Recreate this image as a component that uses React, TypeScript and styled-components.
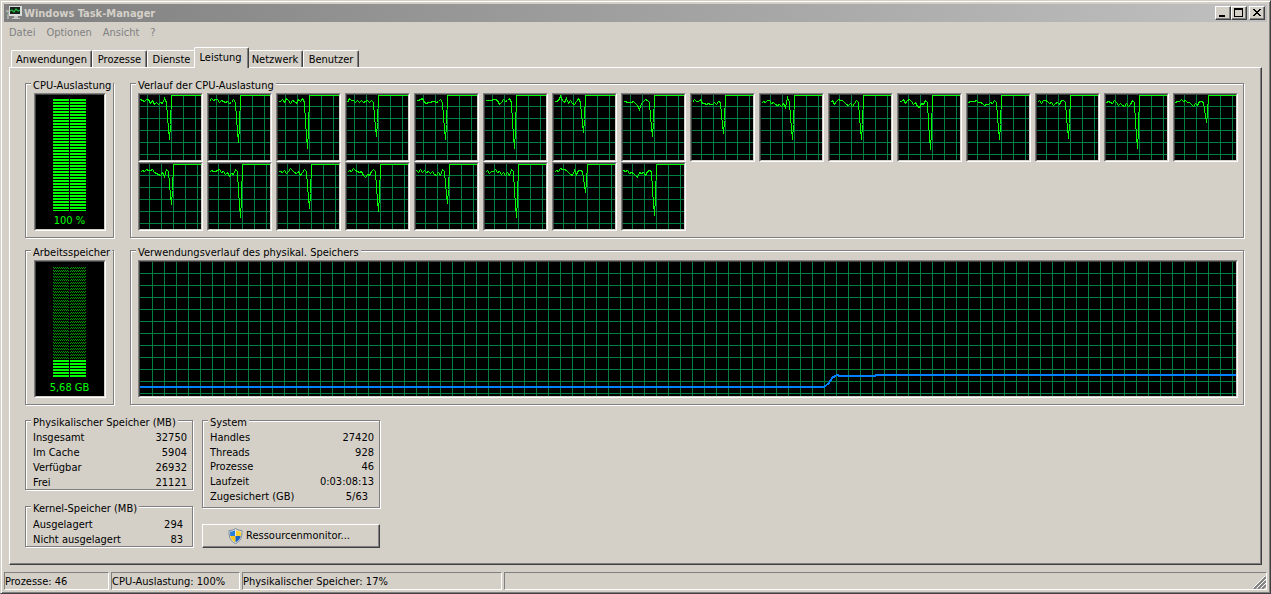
import React from "react";
import styled, { createGlobalStyle, css } from "styled-components";

const face = "#d4d0c8";
const shade = "#808080";
const dark = "#404040";

const GlobalStyle = createGlobalStyle`
  *, *::before, *::after { box-sizing: border-box; }
  body {
    margin: 0;
    background: ${face};
    color: #000;
    font: 11px/14px "DejaVu Sans Condensed", "DejaVu Sans", sans-serif;
  }
  button { font: inherit; color: inherit; }
`;

const raised = css`
  background: ${face};
  border: 1px solid;
  border-color: #fff ${dark} ${dark} #fff;
  box-shadow: inset -1px -1px 0 ${shade};
`;

const Window = styled.div`
  display: flex;
  flex-direction: column;
  min-height: 100vh;
  padding: 3px;
  border: 1px solid;
  border-color: ${face} ${dark} ${dark} ${face};
  box-shadow: inset 1px 1px 0 #fff, inset -1px -1px 0 ${shade};
`;

const TitleBar = styled.header`
  display: flex;
  align-items: center;
  height: 18px;
  padding: 0 2px;
  background: linear-gradient(to right, #808080, #c0c0c0);
`;

const Title = styled.h1`
  flex: 1;
  margin: 0 0 0 2px;
  padding-top: 2px;
  color: ${face};
  font-size: 11px;
  font-weight: bold;
  line-height: 16px;
`;

const CaptionButton = styled.button<{ $apart?: boolean }>`
  ${raised}
  display: flex;
  width: 16px;
  height: 14px;
  margin-left: ${(p) => (p.$apart ? 2 : 0)}px;
  padding: 0;
`;

const MenuBar = styled.nav`
  display: flex;
  gap: 11px;
  height: 20px;
  padding: 2px 5px 0;
`;

const MenuItem = styled.button`
  padding: 0;
  border: 0;
  background: none;
  color: ${shade};
`;

const TabList = styled.div`
  display: flex;
  align-items: flex-end;
  height: 25px;
  padding: 0 7px;
`;

const Tab = styled.button<{ $width: number; $active?: boolean }>`
  ${raised}
  width: ${(p) => p.$width}px;
  height: ${(p) => (p.$active ? 21 : 17)}px;
  margin: ${(p) => (p.$active ? "0 -2px -1px" : "0")};
  padding: ${(p) => (p.$active ? "0 2px 1px 0" : "1px 0 0")};
  border-bottom: 0;
  border-radius: 2px 2px 0 0;
  box-shadow: inset -1px 0 0 ${shade};
  white-space: nowrap;
  z-index: ${(p) => (p.$active ? 1 : 0)};
`;

const Panel = styled.main`
  ${raised}
  flex: 1;
  display: flex;
  flex-direction: column;
  margin: 0 5px 7px;
  padding: 15px 17px 16px 15px;
`;

const MeterRow = styled.div`
  display: flex;
  gap: 16px;
  margin-bottom: 12px;
`;

const Group = styled.section<{ $grow?: boolean; $width?: number; $bottom?: number }>`
  flex: ${(p) => (p.$grow ? "1 1 0" : "none")};
  width: ${(p) => (p.$width ? `${p.$width}px` : "auto")};
  min-width: 0;
  padding: 0 5px ${(p) => p.$bottom ?? 0}px 7px;
  border: 1px solid ${shade};
  box-shadow: 1px 1px 0 #fff, inset 1px 1px 0 #fff;
`;

const Legend = styled.h2`
  width: fit-content;
  margin: -5px 0 0 -2px;
  padding: 0 2px;
  background: ${face};
  font-size: 11px;
  font-weight: normal;
  line-height: 14px;
  white-space: nowrap;
`;

const Sunken = styled.div`
  overflow: hidden;
  border: 1px solid;
  border-color: ${shade} #fff #fff ${shade};
  background: ${face};

  > * {
    border: 1px solid;
    border-color: ${dark} ${face} ${face} ${dark};
    background: #000;
  }
`;

const MeterFace = styled.div`
  display: flex;
  flex-direction: column;
  align-items: center;
  height: 136px;
  padding: 4px 1px 0 0;
  color: #0f0;
`;

const MeterBars = styled.svg`
  display: block;
  width: 33px;
  height: 113px;
  margin-bottom: 2px;
`;

const MeterFrame = styled(Sunken)`
  margin: 0 2px 0 1px;
`;

const CpuGrid = styled.div`
  display: grid;
  grid-template-columns: repeat(16, 1fr);
  column-gap: 4px;
`;

const Plot = styled.svg<{ $height: number }>`
  display: block;
  width: 100%;
  height: ${(p) => p.$height}px;
`;

const Details = styled.div`
  display: flex;
  gap: 9px;
  margin-top: 3px;
`;

const Column = styled.div<{ $width: number }>`
  display: flex;
  flex-direction: column;
  gap: 16px;
  width: ${(p) => p.$width}px;
`;

const Figures = styled.table<{ $height: number }>`
  width: 100%;
  height: ${(p) => p.$height}px;
  border-collapse: collapse;
  line-height: 13px;
`;

const Name = styled.th`
  padding: 1px 0 0;
  font-weight: normal;
  text-align: left;
  white-space: nowrap;
`;

const Value = styled.td<{ $inset?: number }>`
  padding: 1px ${(p) => p.$inset ?? 0}px 0 0;
  text-align: right;
`;

const PushButton = styled.button`
  ${raised}
  display: flex;
  align-items: center;
  justify-content: center;
  gap: 3px;
  height: 24px;
  padding: 0 4px 1px 0;
`;

const StatusBar = styled.footer`
  display: flex;
  gap: 2px;
  height: 18px;
`;

const StatusCell = styled.div<{ $width?: number }>`
  flex: ${(p) => (p.$width ? `0 0 ${p.$width}px` : "1")};
  display: flex;
  align-items: flex-end;
  justify-content: ${(p) => (p.$width ? "flex-start" : "flex-end")};
  border: 1px solid;
  border-color: ${shade} #fff #fff ${shade};
  line-height: 14px;
  white-space: nowrap;
`;

const AppIcon = () => (
  <svg width="16" height="16" viewBox="0 0 16 16" aria-hidden="true">
    <path d="M0 5h3v9H1V7H0z" fill="#a9aca6" />
    <path d="M1 8h1v1H1z" fill="#2c9a3c" />
    <path d="M3 1h13v10H3z" fill="#d9dcda" />
    <path d="M4 2h10v7H4z" fill="#15201a" />
    <path d="M4 6l2-1 2 2 2-3 2 2 2-1" fill="none" stroke="#22b43c" strokeWidth="1.3" />
    <path d="M8 11h4v2h2v1H6v-1h2z" fill="#c5c8c5" />
  </svg>
);

const ShieldIcon = () => (
  <svg width="15" height="16" viewBox="0 0 15 16" aria-hidden="true">
    <path d="M7.500.5C9.500 2 11.500 2.500 14 2.500C14.200 9 12.500 13.500 7.500 15.500C2.500 13.500.8 9 1 2.500C3.500 2.500 5.500 2 7.500.5z" fill="#dfe3e6" stroke="#7d8c99" />
    <path d="M7 2.200V8H2.200C2 6.500 2 5 2.100 3.600C4 3.500 5.500 3 7 2.200z" fill="#2a7fd8" />
    <path d="M8 2.200C9.500 3 11 3.500 12.900 3.600C13 5 13 6.500 12.800 8H8z" fill="#fbd22b" />
    <path d="M2.300 8H7.500v6.300C4.500 13 2.900 11 2.300 8z" fill="#f8c81c" />
    <path d="M7.500 8h5.200c-.6 3-2.200 5-5.200 6.300z" fill="#1c63c4" />
  </svg>
);

const Grip = () => (
  <svg width="13" height="13" viewBox="0 0 13 13" aria-hidden="true">
    <path d="M1 13L13 1M5 13L13 5M9 13L13 9" stroke="#808080" strokeWidth="2" />
    <path d="M0 12L12 0M4 12L13 3M8 12L13 7" stroke="#fff" />
  </svg>
);

const Meter = ({ id, lit, start, label }: { id: string; lit: number; start: number; label: string }) => (
  <MeterFrame>
    <MeterFace>
      <MeterBars shapeRendering="crispEdges" aria-hidden="true">
        <defs>
          <pattern id={`${id}-lit`} y={start} width="17" height="3" patternUnits="userSpaceOnUse">
            <path d="M0 0h16v2H0z" fill="#0f0" />
          </pattern>
          <pattern id={`${id}-dim`} y={start} width="2" height="3" patternUnits="userSpaceOnUse">
            <path d="M0 0h1v1H0zM1 1h1v1H1z" fill="#00a000" />
          </pattern>
        </defs>
        <rect y={start} width="33" height={112 - start - lit} fill={`url(#${id}-dim)`} />
        <rect x="16" width="1" height="113" fill="#000" />
        <rect y={112 - lit} width="33" height={lit} fill={`url(#${id}-lit)`} />
      </MeterBars>
      {label}
    </MeterFace>
  </MeterFrame>
);

/* Twelve-pixel grid; lines past the plot's edge are clipped by the svg. */
const GridLines = ({ x }: { x: number }) => {
  const columns = Array.from({ length: 340 }, (_, i) => `M${x + i * 12} 0h1v200h-1z`);
  const rows = Array.from({ length: 12 }, (_, i) => `M0 ${11 + i * 12}h4000v1H0z`);
  return (
    <g fill="#008040">
      <path d={columns.join("")} />
      <path d={rows.join("")} />
    </g>
  );
};

/* Load history per core: samples two pixels apart, then the depth of the drop before full load. */
const cores: { load: number[]; drop: number }[] = [
  { load: [4, 5, 6, 4, 4, 8, 5, 9, 7, 9, 7, 8, 3], drop: 44 },
  { load: [6, 3, 5, 4, 4, 7, 5, 6, 7, 6, 8, 7, 4], drop: 47 },
  { load: [6, 6, 4, 7, 3, 5, 8, 5, 6, 8, 4, 6, 3], drop: 53 },
  { load: [7, 3, 5, 5, 7, 5, 7, 5, 7, 6, 5, 7, 5], drop: 41 },
  { load: [5, 5, 4, 3, 7, 8, 7, 7, 6, 6, 7, 6, 4], drop: 44 },
  { load: [5, 5, 5, 5, 4, 4, 5, 9, 7, 4, 6, 5, 3], drop: 53 },
  { load: [6, 6, 5, 1, 5, 7, 3, 8, 5, 8, 9, 6, 3], drop: 37 },
  { load: [6, 6, 7, 7, 7, 6, 8, 10, 14, 8, 6, 4, 5], drop: 41 },
  { load: [7, 4, 6, 6, 4, 8, 8, 9, 8, 9, 9, 7, 9, 6], drop: 38 },
  { load: [8, 6, 7, 5, 5, 8, 7, 9, 10, 9, 11, 8, 12, 2], drop: 44 },
  { load: [7, 5, 9, 6, 4, 5, 5, 7, 9, 10, 8, 11, 8, 5], drop: 44 },
  { load: [6, 6, 4, 8, 5, 4, 6, 9, 7, 11, 12, 8, 9, 5], drop: 54 },
  { load: [7, 6, 6, 6, 5, 7, 7, 8, 10, 9, 9, 7, 8, 5], drop: 44 },
  { load: [7, 5, 8, 5, 5, 6, 8, 7, 10, 8, 7, 9, 5, 5], drop: 43 },
  { load: [7, 6, 7, 8, 5, 7, 10, 8, 10, 11, 8, 11, 9, 5], drop: 53 },
  { load: [7, 6, 6, 4, 6, 5, 7, 7, 9, 11, 8, 10, 6, 6], drop: 27 },
  { load: [8, 6, 7, 5, 6, 6, 5, 8, 9, 10, 11, 8, 12, 5], drop: 40 },
  { load: [8, 6, 7, 7, 6, 5, 8, 7, 10, 8, 12, 9, 10, 5], drop: 53 },
  { load: [7, 7, 8, 6, 9, 7, 4, 6, 8, 9, 7, 11, 8, 5], drop: 44 },
  { load: [8, 6, 7, 4, 6, 7, 8, 7, 11, 13, 10, 11, 7, 5], drop: 47 },
  { load: [6, 8, 5, 8, 6, 8, 7, 9, 7, 10, 11, 8, 11, 5], drop: 39 },
  { load: [8, 6, 9, 7, 7, 5, 8, 7, 10, 8, 11, 8, 11, 5], drop: 53 },
  { load: [8, 6, 7, 4, 5, 5, 6, 8, 10, 11, 6, 10, 6, 6], drop: 28 },
  { load: [6, 7, 6, 9, 8, 9, 11, 13, 8, 9, 8, 11, 7, 6], drop: 51 },
];

const CoreGraph = ({ index, load, drop }: { index: number; load: number[]; drop: number }) => {
  const rise = index < 8 ? 31 : 33;
  const points = [
    ...load.map((y, i) => [i * 2, y]),
    [rise - 5, 7],
    [rise - 4, Math.round(drop * 0.5)],
    [rise - 3, Math.round(drop * 0.75)],
    [rise - 2, drop],
    [rise - 1, Math.round(drop * 0.65)],
    [rise, 0],
    [2000, 0],
  ];
  return (
    <Sunken>
      <Plot $height={67} shapeRendering="crispEdges" role="img" aria-label={`CPU ${index}`}>
        <GridLines x={rise % 12} />
        <polyline
          points={points.map(([x, y]) => `${x + 0.5},${y + 0.5}`).join(" ")}
          fill="none"
          stroke="#0f0"
        />
      </Plot>
    </Sunken>
  );
};

type Row = [name: string, value: string, inset?: number];

const FigureTable = ({ rows, height }: { rows: Row[]; height: number }) => (
  <Figures $height={height}>
    <tbody>
      {rows.map(([name, value, inset]) => (
        <tr key={name}>
          <Name scope="row">{name}</Name>
          <Value $inset={inset}>{value}</Value>
        </tr>
      ))}
    </tbody>
  </Figures>
);

const tabs = [
  { name: "Anwendungen", width: 81 },
  { name: "Prozesse", width: 55 },
  { name: "Dienste", width: 49 },
  { name: "Leistung", width: 55 },
  { name: "Netzwerk", width: 56 },
  { name: "Benutzer", width: 56 },
];

export default function App() {
  return (
    <>
      <GlobalStyle />
      <Window>
        <TitleBar>
          <AppIcon />
          <Title>Windows Task-Manager</Title>
          <CaptionButton aria-label="Minimieren">
            <svg width="13" height="11" aria-hidden="true"><path d="M3 8h6v2H3z" /></svg>
          </CaptionButton>
          <CaptionButton aria-label="Maximieren">
            <svg width="13" height="11" aria-hidden="true"><path fillRule="evenodd" d="M2 1h9v9H2zM3 3v6h7V3z" /></svg>
          </CaptionButton>
          <CaptionButton $apart aria-label="Schließen">
            <svg width="13" height="11" shapeRendering="crispEdges" aria-hidden="true">
              <path d="M3 2h2v1h1v1h2V3h1V2h2v1h-1v1H9v1H8v1h1v1h1v1h1v1H9V8H8V7H6v1H5v1H3V8h1V7h1V6h1V5H5V4H4V3H3z" />
            </svg>
          </CaptionButton>
        </TitleBar>
        <MenuBar>
          {["Datei", "Optionen", "Ansicht", "?"].map((item) => (
            <MenuItem key={item}>{item}</MenuItem>
          ))}
        </MenuBar>
        <TabList role="tablist">
          {tabs.map(({ name, width }) => (
            <Tab key={name} role="tab" $width={width} $active={name === "Leistung"} aria-selected={name === "Leistung"}>
              {name}
            </Tab>
          ))}
        </TabList>
        <Panel>
          <MeterRow>
            <Group $width={89} $bottom={6}>
              <Legend>CPU-Auslastung</Legend>
              <Meter id="cpu" lit={112} start={0} label="100 %" />
            </Group>
            <Group $grow $bottom={6}>
              <Legend>Verlauf der CPU-Auslastung</Legend>
              <CpuGrid>
                {cores.map((core, i) => (
                  <CoreGraph key={i} index={i} {...core} />
                ))}
              </CpuGrid>
            </Group>
          </MeterRow>
          <MeterRow>
            <Group $width={89} $bottom={6}>
              <Legend>Arbeitsspeicher</Legend>
              <Meter id="memory" lit={18} start={1} label="5,68 GB" />
            </Group>
            <Group $grow $bottom={6}>
              <Legend>Verwendungsverlauf des physikal. Speichers</Legend>
              <Sunken>
                <Plot $height={136} shapeRendering="crispEdges" role="img" aria-label="Speicherverlauf">
                  <GridLines x={12} />
                  <polyline
                    points="0,125 684,125 689,121 692,116 695,114 697,113 700,114 735,114 736,113 4000,113"
                    fill="none"
                    stroke="#0080ff"
                    strokeWidth="2"
                  />
                </Plot>
              </Sunken>
            </Group>
          </MeterRow>
          <Details>
            <Column $width={168}>
              <Group>
                <Legend>Physikalischer Speicher (MB)</Legend>
                <FigureTable
                  height={59}
                  rows={[["Insgesamt", "32750"], ["Im Cache", "5904"], ["Verfügbar", "26932"], ["Frei", "21121"]]}
                />
              </Group>
              <Group>
                <Legend>Kernel-Speicher (MB)</Legend>
                <FigureTable height={30} rows={[["Ausgelagert", "294", 4], ["Nicht ausgelagert", "83", 4]]} />
              </Group>
            </Column>
            <Column $width={178}>
              <Group $bottom={4}>
                <Legend>System</Legend>
                <FigureTable
                  height={73}
                  rows={[
                    ["Handles", "27420"],
                    ["Threads", "928"],
                    ["Prozesse", "46"],
                    ["Laufzeit", "0:03:08:13"],
                    ["Zugesichert (GB)", "5/63", 6],
                  ]}
                />
              </Group>
              <PushButton>
                <ShieldIcon />
                Ressourcenmonitor...
              </PushButton>
            </Column>
          </Details>
        </Panel>
        <StatusBar>
          <StatusCell $width={105}>Prozesse: 46</StatusCell>
          <StatusCell $width={129}>CPU-Auslastung: 100%</StatusCell>
          <StatusCell $width={260}>Physikalischer Speicher: 17%</StatusCell>
          <StatusCell><Grip /></StatusCell>
        </StatusBar>
      </Window>
    </>
  );
}
